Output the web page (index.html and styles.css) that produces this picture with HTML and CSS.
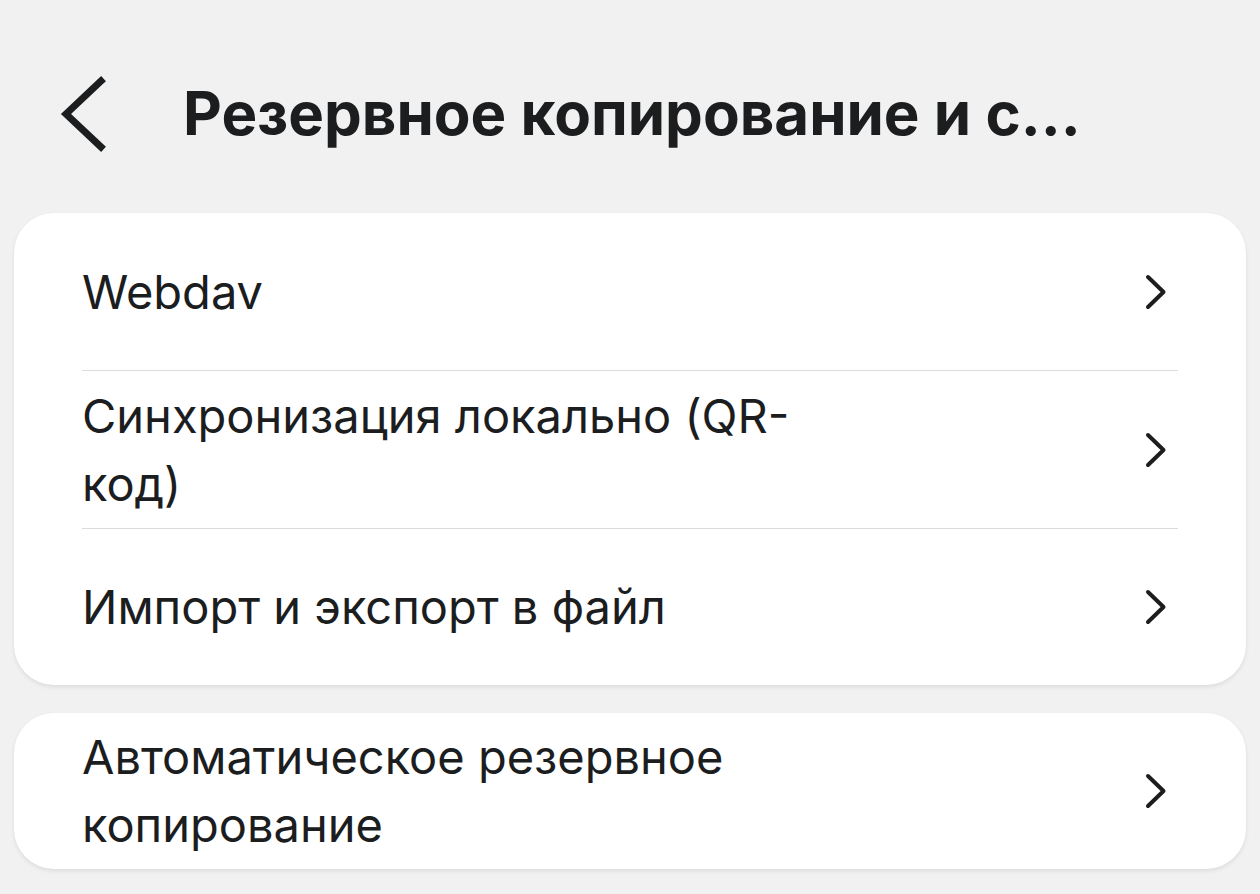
FILE: index.html
```html
<!DOCTYPE html>
<html lang="ru">
<head>
<meta charset="utf-8">
<title>Резервное копирование и синхронизация</title>
<link rel="stylesheet" href="styles.css">
</head>
<body>
<header class="topbar">
  <svg class="back" width="48" height="80" viewBox="0 0 48 80" aria-hidden="true">
    <path d="M43 8 L8 41 L43 74" fill="none" stroke="#1b1d1f" stroke-width="7" stroke-linejoin="miter" stroke-linecap="square"/>
  </svg>
  <h1 class="title">Резервное копирование и с...</h1>
</header>

<section class="card">
  <div class="row">
    <span class="label">Webdav</span>
    <svg class="chev" width="24" height="40" viewBox="0 0 24 40" aria-hidden="true"><path d="M5 5 L20.5 20 L5 35" fill="none" stroke="#1b1d1f" stroke-width="4" stroke-linecap="round" stroke-linejoin="round"/></svg>
  </div>
  <div class="row">
    <span class="label">Синхронизация локально (QR-код)</span>
    <svg class="chev" width="24" height="40" viewBox="0 0 24 40" aria-hidden="true"><path d="M5 5 L20.5 20 L5 35" fill="none" stroke="#1b1d1f" stroke-width="4" stroke-linecap="round" stroke-linejoin="round"/></svg>
  </div>
  <div class="row row-last">
    <span class="label">Импорт и экспорт в файл</span>
    <svg class="chev" width="24" height="40" viewBox="0 0 24 40" aria-hidden="true"><path d="M5 5 L20.5 20 L5 35" fill="none" stroke="#1b1d1f" stroke-width="4" stroke-linecap="round" stroke-linejoin="round"/></svg>
  </div>
</section>

<section class="card card-second">
  <div class="row row-short">
    <span class="label">Автоматическое резервное копирование</span>
    <svg class="chev" width="24" height="40" viewBox="0 0 24 40" aria-hidden="true"><path d="M5 5 L20.5 20 L5 35" fill="none" stroke="#1b1d1f" stroke-width="4" stroke-linecap="round" stroke-linejoin="round"/></svg>
  </div>
</section>
</body>
</html>
```
FILE: styles.css
```css
html, body {
  margin: 0;
  padding: 0;
}
body {
  background: #f1f1f1;
  color: #1b1d1f;
  font-family: Inter, "Noto Sans", sans-serif;
  width: 1260px;
  height: 894px;
  overflow: hidden;
}
.topbar {
  display: flex;
  align-items: center;
  padding: 77px 0 0 58px;
  height: 72px;
  margin-bottom: 64px;
}
.back {
  flex: none;
  display: block;
}
.title {
  margin: 0 0 0 77px;
  font-size: 60px;
  font-weight: 700;
  line-height: 72px;
  white-space: nowrap;
}
.card {
  margin: 0 14px;
  background: #ffffff;
  border-radius: 40px;
  box-shadow: 0 2px 4px rgba(0, 0, 0, 0.09);
}
.card-second {
  margin-top: 28px;
}
.row {
  margin: 0 68px;
  min-height: 157px;
  box-sizing: border-box;
  padding: 10px 0;
  display: flex;
  align-items: center;
  justify-content: space-between;
}
.row + .row {
  border-top: 1px solid #dcdcdc;
  min-height: 158px;
}
.row + .row-last {
  min-height: 157px;
}
.row-short {
  min-height: 155px;
}
.label {
  font-size: 47px;
  line-height: 68px;
  max-width: 760px;
}
.chev {
  flex: none;
  display: block;
  margin-right: 11px;
}
```
